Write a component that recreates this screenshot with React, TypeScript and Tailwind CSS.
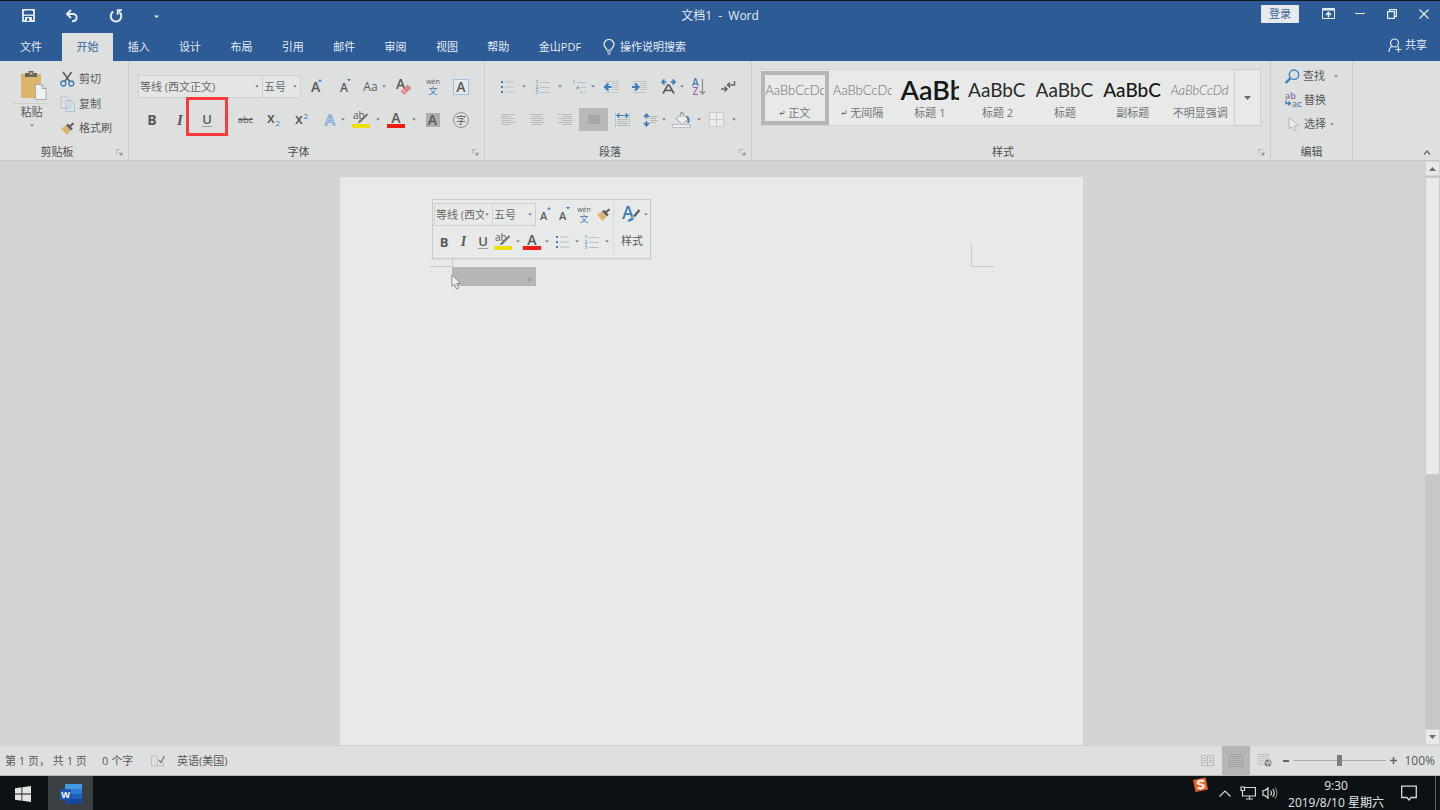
import type { ReactNode } from "react";

const BLUE = "#3f7cb8";
const INK = "#585a59";

type BtnProps = { label: string; className?: string; children?: ReactNode };

function IconButton({ label, className = "w-7", children }: BtnProps) {
  return (
    <button type="button" aria-label={label} title={label} className={`flex h-[23px] shrink-0 items-center justify-center ${className}`}>
      {children}
    </button>
  );
}

function Caret({ className = "text-[#6c6e6d]" }: { className?: string }) {
  return (
    <svg width="4" height="3" viewBox="0 0 4 3" className={className} aria-hidden="true">
      <path d="M0.200 0.500h3.600L2 2.600z" fill="currentColor" />
    </svg>
  );
}

function CaretButton({ label, className = "w-[10px]" }: BtnProps) {
  return (
    <IconButton label={label} className={className}>
      <Caret />
    </IconButton>
  );
}

function Combo({ label, value, className }: { label: string; value: string; className: string }) {
  return (
    <label className={`relative flex h-[23px] items-center border border-[#cfd1d0] ${className}`}>
      <select aria-label={label} defaultValue={value} className="h-full w-full appearance-none overflow-hidden bg-transparent pl-px pr-2 pt-px text-[#666867] outline-none">
        <option>{value}</option>
      </select>
      <span className="pointer-events-none absolute right-[3px] flex">
        <Caret />
      </span>
    </label>
  );
}

function GrowIcon({ up, small }: { up: boolean; small?: boolean }) {
  return (
    <svg width="16" height="18" viewBox="0 0 16 18" className="overflow-visible" aria-hidden="true">
      <text x="2" y="14" fontSize={small ? 11 : up ? 14 : 12} fontWeight="600" fill={INK}>A</text>
      {up ? <path d="M9 3.500h4L11 1z" fill={BLUE} /> : <path d="M9 1h4l-2 2.500z" fill={BLUE} />}
    </svg>
  );
}

function WenIcon() {
  return (
    <svg width="16" height="18" viewBox="0 0 16 18" className="overflow-visible" aria-hidden="true">
      <text x="8" y="6" fontSize="7" textAnchor="middle" fill={INK}>wén</text>
      <text x="8" y="16" fontSize="9" textAnchor="middle" fill={BLUE}>文</text>
    </svg>
  );
}

function BrushIcon() {
  return (
    <svg width="15" height="14" viewBox="0 0 15 14" aria-hidden="true">
      <path d="M1 6.500 6 3.500l4.500 5L7 13 4.500 10.500z" fill="#dcb46c" />
      <path d="M6 3.200l2-1.400 4.700 5-1.800 1.600z" fill={INK} />
      <path d="M9.500 4.500 13.500 1.200" stroke={INK} strokeWidth="2" />
    </svg>
  );
}

function HighlightIcon() {
  return (
    <svg width="20" height="18" viewBox="0 0 20 18" className="overflow-visible" aria-hidden="true">
      <text x="2" y="8" fontSize="10" fill={INK}>ab</text>
      <path d="M16.500 3 9 10.500" stroke="#747675" strokeWidth="2.200" />
      <path d="M8.700 9.200 6.500 12.500l3.600-1.700z" fill={INK} />
      <rect x="1" y="13" width="18" height="4" fill="#ecdf0c" />
    </svg>
  );
}

function FontColorIcon() {
  return (
    <svg width="20" height="18" viewBox="0 0 20 18" className="overflow-visible" aria-hidden="true">
      <text x="10" y="12" fontSize="14" fontWeight="600" textAnchor="middle" fill={INK}>A</text>
      <rect x="1" y="13" width="18" height="4" fill="#ee1c12" />
    </svg>
  );
}

function BulletsIcon() {
  return (
    <svg width="15" height="14" viewBox="0 0 15 14" aria-hidden="true">
      {[2, 7, 12].map((y) => (
        <g key={y}>
          <rect x="1" y={y - 1} width="2" height="2" fill={BLUE} />
          <rect x="5" y={y - 0.5} width="9" height="1" fill="#bdbfbe" />
        </g>
      ))}
    </svg>
  );
}

function NumbersIcon() {
  return (
    <svg width="16" height="16" viewBox="0 0 16 16" className="overflow-visible" aria-hidden="true">
      {[3, 8, 13].map((y, i) => (
        <g key={y}>
          <text x="0.500" y={y + 2} fontSize="5" fill={BLUE}>{i + 1}</text>
          <rect x="5" y={y} width="10" height="1" fill="#bdbfbe" />
        </g>
      ))}
    </svg>
  );
}

function MultilevelIcon() {
  return (
    <svg width="16" height="16" viewBox="0 0 16 16" className="shrink-0 overflow-visible" aria-hidden="true">
      <text x="0.500" y="5" fontSize="5" fill={BLUE}>1</text>
      <text x="4" y="10" fontSize="6" fill={BLUE}>a</text>
      <text x="8.500" y="15" fontSize="5" fill={BLUE}>i</text>
      <path d="M5 3.500h9M9 8.500h5M11 13.500h3" stroke="#bdbfbe" />
    </svg>
  );
}

function IndentIcon({ out }: { out?: boolean }) {
  return (
    <svg width="17" height="14" viewBox="0 0 17 14" aria-hidden="true">
      <path d="M1 1.500h15M9 3.500h7M9 5.500h7M9 7.500h7M9 9.500h7M1 12.500h15" stroke="#c3c5c4" />
      {out ? (
        <path d="M8.500 7H3M5.500 3.500 2 7l3.500 3.500" fill="none" stroke={BLUE} strokeWidth="2.200" />
      ) : (
        <path d="M1 7h5.500M4 3.500 7.500 7 4 10.500" fill="none" stroke={BLUE} strokeWidth="2.200" />
      )}
    </svg>
  );
}

function AlignIcon({ kind }: { kind: "left" | "center" | "right" }) {
  const widths = [14, 10, 14, 10, 14, 10];
  return (
    <svg width="14" height="12" viewBox="0 0 14 12" aria-hidden="true">
      {widths.map((w, i) => {
        const x = kind === "left" ? 0 : kind === "center" ? (14 - w) / 2 : 14 - w;
        return <rect key={i} x={x} y={i * 2} width={w} height="1" fill="#b9bbba" />;
      })}
    </svg>
  );
}

function LauncherIcon() {
  return (
    <svg width="7" height="7" viewBox="0 0 7 7" aria-hidden="true">
      <path d="M0.500 4.500v-4h4" fill="none" stroke="#b0b2b1" />
      <path d="M3 3l2 2M6 3.500v2.500H3.500z" stroke="#8a8c8b" fill="#8a8c8b" strokeWidth="0.600" />
    </svg>
  );
}

function Group({ title, launcher, className, children }: { title: string; launcher?: boolean; className: string; children: ReactNode }) {
  return (
    <section aria-label={title} className={`flex shrink-0 flex-col border-r border-[#cbcdcc] ${className}`}>
      <div className="h-[82px]">{children}</div>
      <div className="relative flex h-[17px] items-center justify-center pt-px text-[#4e504f]">
        <span>{title}</span>
        {launcher && (
          <button type="button" aria-label={`${title}设置`} className="absolute right-[5px] top-[6px]">
            <LauncherIcon />
          </button>
        )}
      </div>
    </section>
  );
}

const tabs = ["插入", "设计", "布局", "引用", "邮件", "审阅", "视图", "帮助"];

function TitleBar() {
  return (
    <header className="bg-[#2d5b96] text-[#e6ecf4]">
      <div className="grid h-8 grid-cols-[1fr_auto_1fr] border-t border-[#10131a]">
        <div className="flex items-center pb-[2px] pl-[6px]">
          <IconButton label="保存" className="w-11">
            <svg width="13" height="13" viewBox="0 0 13 13" aria-hidden="true">
              <path d="M1 1h11v11H1z" fill="none" stroke="#e6ecf4" strokeWidth="1.800" />
              <path d="M3 1.500h7v4.500H3z" fill="#2d5b96" />
              <path d="M1 6.200h11" stroke="#e6ecf4" strokeWidth="1.400" />
              <path d="M3 8h7v4H3z" fill="#e6ecf4" />
              <path d="M5 9.300h2V12H5z" fill="#2d5b96" />
            </svg>
          </IconButton>
          <IconButton label="撤消" className="w-11">
            <svg width="14" height="14" viewBox="0 0 14 14" aria-hidden="true">
              <path d="M6 1 2 5l4 4M2.500 5H8c5 0 5 7.200-1 7.200" fill="none" stroke="#e6ecf4" strokeWidth="2" />
            </svg>
          </IconButton>
          <IconButton label="重复" className="w-11">
            <svg width="14" height="14" viewBox="0 0 14 14" aria-hidden="true">
              <path d="M4.200 2.600A5.300 5.300 0 1 0 9.800 2.600" fill="none" stroke="#e6ecf4" strokeWidth="2" />
              <path d="M13 1.200H8.700v4.600" fill="none" stroke="#e6ecf4" strokeWidth="1.800" />
            </svg>
          </IconButton>
          <IconButton label="自定义快速访问工具栏" className="w-9">
            <svg width="5" height="4" viewBox="0 0 5 4" aria-hidden="true">
              <path d="M0 .5h5M0 1.500h5L2.500 4z" stroke="none" fill="#e6ecf4" />
            </svg>
          </IconButton>
        </div>
        <h1 className="flex items-center whitespace-pre pb-[2px] text-[12px]">文档1  -  Word</h1>
        <div className="flex h-[25px] items-center justify-end">
          <button type="button" className="mr-[13px] h-[18px] w-[38px] rounded-[1px] bg-[#e6eaee] leading-[18px] text-[#3c659c]">登录</button>
          <IconButton label="功能区显示选项" className="w-8">
            <svg width="13" height="11" viewBox="0 0 13 11" aria-hidden="true">
              <path d="M0.500 0.500h12v10H0.500z" fill="none" stroke="#e6ecf4" />
              <path d="M0.500 1.500h12" stroke="#e6ecf4" strokeWidth="2" />
              <path d="M6.500 9.500V5M4 7l2.500-2.500L9 7" fill="none" stroke="#e6ecf4" strokeWidth="1.600" />
            </svg>
          </IconButton>
          <IconButton label="最小化" className="w-8">
            <svg width="10" height="1" aria-hidden="true"><path d="M0 .5h10" stroke="#e6ecf4" /></svg>
          </IconButton>
          <IconButton label="还原" className="w-8">
            <svg width="10" height="10" viewBox="0 0 10 10" fill="none" stroke="#e6ecf4" strokeWidth="1.300" aria-hidden="true">
              <path d="M0.600 2.600h6.800v6.800H0.600zM2.600 2.600v-2h6.800v6.800h-2" />
            </svg>
          </IconButton>
          <IconButton label="关闭" className="w-8">
            <svg width="10" height="10" viewBox="0 0 10 10" stroke="#e6ecf4" strokeWidth="1.200" aria-hidden="true">
              <path d="M.5.5l9 9M9.500.500l-9 9" />
            </svg>
          </IconButton>
        </div>
      </div>
      <nav className="flex h-[29px] items-stretch" aria-label="功能区选项卡">
        <button type="button" className="w-[62px] pt-px">文件</button>
        <button type="button" className="mt-px w-[51px] bg-[#dee0df] text-[#3c659c]">开始</button>
        <div className="flex w-[411px] pt-px">
          {tabs.map((t) => (
            <button type="button" key={t} className="flex-1">{t}</button>
          ))}
        </div>
        <button type="button" className="w-[72px] pt-px">金山PDF</button>
        <button type="button" className="flex items-center gap-[5px] pl-[7px] pt-px">
          <svg width="12" height="16" viewBox="0 0 12 16" fill="none" stroke="#e6ecf4" strokeWidth="1.200" aria-hidden="true">
            <path d="M3.800 11C3.800 9 1 8.300 1 5.500a5 5 0 0 1 10 0C11 8.300 8.200 9 8.200 11zM4 13h4M4.500 15h3" />
          </svg>
          操作说明搜索
        </button>
        <button type="button" className="mb-[3px] ml-auto mr-[13px] flex items-center gap-[3px] pt-px">
          <svg width="14" height="15" viewBox="0 0 14 15" fill="none" stroke="#e6ecf4" strokeWidth="1.200" aria-hidden="true">
            <circle cx="6.500" cy="5" r="4" />
            <path d="M1 14c0-3 1.500-5 3.500-5.500M8 8.500l1 .5M10.500 8.500v6M7.500 11.500h6" />
          </svg>
          共享
        </button>
      </nav>
    </header>
  );
}

function ClipboardGroup() {
  return (
    <Group title="剪贴板" launcher className="w-[129px] [&>div:last-child]:pr-[14px]">
      <div className="flex h-full pl-3 pt-2">
        <div className="flex w-[39px] flex-col items-center">
          <button type="button" aria-label="粘贴" className="flex h-[34px] w-full justify-end pr-1 pt-[2px]">
            <svg width="27" height="30" viewBox="0 0 27 30" aria-hidden="true">
              <path d="M1 3h20v24H1z" fill="#dcb46c" />
              <path d="M5 2h3.500V0h5v2H17v4H5z" fill="#626463" />
              <rect x="9.500" y="1.500" width="3" height="2" fill="#dcb46c" />
              <path d="M15.500 13.500h6.500l4 4v11H15.500z" fill="#f0f2f1" stroke="#a9abaa" />
              <path d="M22 13.500v4h4" fill="none" stroke="#a9abaa" />
            </svg>
          </button>
          <button type="button" className="flex w-full flex-col items-center gap-1 border-t border-[#cfd1d0] text-[#585a59]">
            <span className="leading-4">粘贴</span>
            <Caret />
          </button>
        </div>
        <div className="flex flex-col pl-[9px] text-[#585a59]">
          <button type="button" className="flex h-[25px] items-center gap-1 pb-1">
            <svg width="15" height="16" viewBox="0 0 15 16" fill="none" aria-hidden="true">
              <path d="M3 1l7 10M11.500 1l-7 10" stroke="#585a59" strokeWidth="1.500" />
              <circle cx="3.300" cy="12.500" r="2.500" stroke={BLUE} strokeWidth="1.300" />
              <circle cx="11.300" cy="12.500" r="2.500" stroke={BLUE} strokeWidth="1.300" />
            </svg>
            剪切
          </button>
          <button type="button" className="flex h-[25px] items-center gap-1 pb-1">
            <svg width="15" height="16" viewBox="0 0 15 16" fill="#e2e7ea" stroke="#b3bcc4" aria-hidden="true">
              <path d="M1 .8h5l3 3v8H1zM6 4.500h5.500l3 3v8H6z" />
              <path d="M11 4.500v3.500h3.500M7.500 9.500h5M7.500 11.500h5M7.500 13.500h5M2.500 4h3M2.500 6h3M2.500 8h3" stroke="#bfd0de" fill="none" />
            </svg>
            复制
          </button>
          <button type="button" className="flex h-[25px] items-center gap-1 pb-1">
            <BrushIcon />
            格式刷
          </button>
        </div>
      </div>
    </Group>
  );
}

function FontGroup() {
  return (
    <Group title="字体" launcher className="w-[356px] [&>div:last-child]:pr-4">
      <div className="flex flex-col gap-[10px] pl-[9px] pt-[14px]">
        <div className="flex">
          <Combo label="字体" value="等线 (西文正文)" className="w-[125px] bg-[#e5e7e6]" />
          <Combo label="字号" value="五号" className="-ml-px mr-px w-[39px] bg-[#e5e7e6]" />
          <IconButton label="增大字号" className="w-[29px]"><GrowIcon up /></IconButton>
          <IconButton label="减小字号" className="w-[29px]"><GrowIcon up={false} /></IconButton>
          <IconButton label="更改大小写" className="w-[29px] gap-1">
            <span className="text-[12px] font-medium text-[#585a59]">Aa</span>
            <Caret />
          </IconButton>
          <IconButton label="清除格式" className="w-[29px]">
            <svg width="18" height="18" viewBox="0 0 18 18" className="overflow-visible" aria-hidden="true">
              <text x="1" y="11" fontSize="14" fontWeight="600" fill={INK}>A</text>
              <path d="M5.500 13.500 12.500 6.500l4 3.500-7 7z" fill="#de8589" />
              <path d="M7.500 11.500l4 3.500" stroke="#f0d6d7" />
            </svg>
          </IconButton>
          <IconButton label="拼音指南" className="w-[29px]"><WenIcon /></IconButton>
          <IconButton label="字符边框" className="w-7">
            <span className="flex h-4 w-4 items-center justify-center border border-[#a3c0dc] bg-[#e6e9ea] text-[14px] font-semibold leading-none text-[#585a59]">A</span>
          </IconButton>
        </div>
        <div className="flex text-[#585a59]">
          <IconButton label="加粗"><span className="text-[14px] font-bold leading-4">B</span></IconButton>
          <IconButton label="倾斜"><span className="font-['Liberation_Serif',serif] text-[15px] font-bold italic leading-4">I</span></IconButton>
          <div className="relative flex">
            <IconButton label="下划线" className="w-[26px]">
              <span className="border-b border-[#9c9e9d] text-[13px] font-semibold leading-[13px]">U</span>
            </IconButton>
            <CaretButton label="下划线选项" className="w-[11px]" />
            <span className="pointer-events-none absolute -left-2 -top-[11px] h-[39px] w-[42px] border-[3px] border-[#fa3a3c]" />
          </div>
          <IconButton label="删除线" className="w-[29px]"><span className="pt-px text-[9px] line-through">abc</span></IconButton>
          <IconButton label="下标">
            <svg width="14" height="16" viewBox="0 0 14 16" className="overflow-visible" aria-hidden="true">
              <text x="0" y="11" fontSize="14" fontWeight="600" fill={INK}>x</text>
              <text x="8.500" y="14" fontSize="8" fill={BLUE}>2</text>
            </svg>
          </IconButton>
          <IconButton label="上标">
            <svg width="14" height="16" viewBox="0 0 14 16" className="overflow-visible" aria-hidden="true">
              <text x="0" y="12" fontSize="14" fontWeight="600" fill={INK}>x</text>
              <text x="8.500" y="6.500" fontSize="8" fill={BLUE}>2</text>
            </svg>
          </IconButton>
          <IconButton label="文本效果" className="w-[22px] pl-[6px]">
            <svg width="14" height="16" viewBox="0 0 14 16" className="overflow-visible" aria-hidden="true">
              <text x="7" y="13" fontSize="15" fontWeight="600" textAnchor="middle" fill="#e8eef3" stroke="#7aa8d3" strokeWidth="1">A</text>
            </svg>
          </IconButton>
          <CaretButton label="文本效果选项" />
          <IconButton label="突出显示" className="w-[25px]"><HighlightIcon /></IconButton>
          <CaretButton label="突出显示颜色" />
          <IconButton label="字体颜色" className="w-[26px]"><FontColorIcon /></IconButton>
          <CaretButton label="选择字体颜色" className="w-[9px]" />
          <IconButton label="字符底纹" className="w-[29px]">
            <span className="flex h-[14px] w-[14px] items-center justify-center bg-[#acaead] text-[14px] font-semibold leading-none">A</span>
          </IconButton>
          <IconButton label="带圈字符" className="w-7">
            <span className="flex h-4 w-4 items-center justify-center rounded-full border border-[#8f9190] text-[10px] leading-none">字</span>
          </IconButton>
        </div>
      </div>
    </Group>
  );
}

function ParagraphGroup() {
  return (
    <Group title="段落" launcher className="w-[267px] [&>div:last-child]:pr-4">
      <div className="flex flex-col gap-[10px] pl-[9px] pt-[14px]">
        <div className="flex">
          <IconButton label="项目符号" className="w-[26px]"><BulletsIcon /></IconButton>
          <CaretButton label="项目符号库" className="w-2" />
          <IconButton label="编号" className="w-[29px]"><NumbersIcon /></IconButton>
          <CaretButton label="编号库" className="w-[6px]" />
          <IconButton label="多级列表" className="w-[26px] pl-2"><MultilevelIcon /></IconButton>
          <CaretButton label="列表库" className="w-[7px]" />
          <IconButton label="减少缩进量" className="w-[30px]"><IndentIcon out /></IconButton>
          <IconButton label="增加缩进量" className="w-[26px]"><IndentIcon /></IconButton>
          <IconButton label="中文版式" className="w-[26px] pl-[6px]">
            <svg width="17" height="16" viewBox="0 0 17 16" className="shrink-0" aria-hidden="true">
              <path d="M6.500 3H2M4.500.500 2 3l2.500 2.500M10.500 3H15M12.500.500 15 3l-2.500 2.500" fill="none" stroke={BLUE} strokeWidth="1.700" />
              <path d="M3 14.500 7.800 6h1.400L14 14.500M5 11.500h7" fill="none" stroke={INK} strokeWidth="1.700" />
            </svg>
          </IconButton>
          <CaretButton label="中文版式选项" className="w-[7px]" />
          <IconButton label="排序">
            <svg width="14" height="18" viewBox="0 0 14 18" className="overflow-visible" aria-hidden="true">
              <text x="0" y="8" fontSize="10" fontWeight="600" fill={BLUE}>A</text>
              <text x="0.500" y="17" fontSize="10" fontWeight="600" fill="#9a62b5">Z</text>
              <path d="M10.500 1v15M8 13l2.500 3 2.500-3" fill="none" stroke="#8c8e8d" strokeWidth="1.200" />
            </svg>
          </IconButton>
          <IconButton label="显示编辑标记" className="w-[30px]">
            <svg width="15" height="13" viewBox="0 0 15 13" fill="none" stroke="#666867" strokeWidth="1.500" aria-hidden="true">
              <path d="M13.500 1v4H7M9 2.500 6.500 5 9 7.500M0 9h6M3.500 6.500 6 9l-2.500 2.500" />
            </svg>
          </IconButton>
        </div>
        <div className="flex">
          <IconButton label="左对齐"><AlignIcon kind="left" /></IconButton>
          <IconButton label="居中" className="w-[29px]"><AlignIcon kind="center" /></IconButton>
          <IconButton label="右对齐"><AlignIcon kind="right" /></IconButton>
          <IconButton label="两端对齐" className="w-[29px] bg-[#b7b9b8]">
            <svg width="12" height="9" aria-hidden="true"><rect width="12" height="9" fill="#a6a8a7" /></svg>
          </IconButton>
          <IconButton label="分散对齐" className="w-7">
            <svg width="15" height="14" viewBox="0 0 15 14" fill="none" aria-hidden="true">
              <path d="M.5 0v14M14.500 0v14" stroke="#a9c8e4" />
              <path d="M2 2.500h11M4.500.300 2 2.500l2.500 2.200M10.500.300 13 2.500l-2.500 2.200" stroke={BLUE} strokeWidth="1.200" />
              <path d="M2 6.500h11M2 8.500h11M2 10.500h11M2 12.500h11" stroke="#b7b9b8" />
            </svg>
          </IconButton>
          <IconButton label="行和段落间距" className="w-[25px] pl-1">
            <svg width="15" height="14" viewBox="0 0 15 14" fill="none" aria-hidden="true">
              <path d="M3.500 1.500v4M1 4l2.500-2.700L6 4M3.500 8v4M1 10l2.500 2.700L6 10" stroke={BLUE} strokeWidth="1.600" />
              <path d="M7 3.500h8M7 5.500h6M7 7.500h8M7 9.500h6" stroke="#b7b9b8" />
            </svg>
          </IconButton>
          <CaretButton label="行距选项" className="w-[6px]" />
          <IconButton label="底纹" className="w-7 pl-[2px]">
            <svg width="20" height="18" viewBox="0 0 20 18" aria-hidden="true">
              <path d="M4 8 10 2l6 6-5.500 5.500z" fill="#eceeed" stroke="#a3a5a4" />
              <path d="M8.500 6V1.500h2.500V6" fill="none" stroke="#a3a5a4" />
              <path d="M14.500 5.500c2.500 1 2.500 4 1.500 6.500" stroke={BLUE} strokeWidth="1.800" fill="none" />
              <rect x=".5" y="13.500" width="18" height="3" fill="#eceeed" stroke="#bdbfbe" />
            </svg>
          </IconButton>
          <CaretButton label="底纹颜色" className="w-[7px]" />
          <IconButton label="边框">
            <svg width="15" height="15" viewBox="0 0 15 15" aria-hidden="true">
              <path d="M.5.5h14v14H.5zM7.500.500v14M.5 7.500h14" fill="#eaeceb" stroke="#c9cbca" />
            </svg>
          </IconButton>
          <CaretButton label="边框选项" className="w-[7px]" />
        </div>
      </div>
    </Group>
  );
}

const styles = [
  { name: "正文", mark: true, sample: "AaBbCcDd", cls: "text-[13px] text-[#6c6e6d] font-light", on: true },
  { name: "无间隔", mark: true, sample: "AaBbCcDd", cls: "text-[13px] text-[#6c6e6d] font-light" },
  { name: "标题 1", sample: "AaBbC", cls: "text-[27px] text-[#161817] font-semibold" },
  { name: "标题 2", sample: "AaBbC", cls: "text-[19px] text-[#2a2c2b]" },
  { name: "标题", sample: "AaBbC", cls: "text-[19px] text-[#2a2c2b]" },
  { name: "副标题", sample: "AaBbC", cls: "text-[19px] text-[#161817] font-medium" },
  { name: "不明显强调", sample: "AaBbCcDd", cls: "text-[13px] text-[#6c6e6d] font-light italic" },
];

function StylesGroup() {
  return (
    <Group title="样式" launcher className="w-[519px] [&>div:last-child]:pr-4">
      <div className="flex pl-[9px] pt-2">
        <div className="flex h-[57px] w-[473px] border-y border-[#d3d5d4] bg-[#e8eae9]">
          {styles.map((s) => (
            <button type="button" key={s.name} className={`mt-px flex min-w-0 flex-1 flex-col items-center border-4 ${s.on ? "border-[#b5b7b6]" : "border-transparent"}`}>
              <span className={`flex h-[30px] w-[59px] items-center overflow-hidden whitespace-nowrap font-[Lato,sans-serif] leading-[30px] ${s.cls}`}>{s.sample}</span>
              <span className="flex items-center gap-[3px] whitespace-nowrap leading-4 text-[#737574]">
                {s.mark && (
                  <svg width="6" height="6" viewBox="0 0 6 6" fill="none" stroke="#737574" aria-hidden="true">
                    <path d="M5 .5v3H1M2.500 2 1 3.500 2.500 5" />
                  </svg>
                )}
                {s.name}
              </span>
            </button>
          ))}
        </div>
        <button type="button" aria-label="其他样式" className="flex h-[57px] w-[27px] items-center justify-center border border-[#cdcfce] bg-[#e8eae9]">
          <svg width="7" height="4" viewBox="0 0 7 4" aria-hidden="true"><path d="M0 0h7L3.500 4z" fill="#6c6e6d" /></svg>
        </button>
      </div>
    </Group>
  );
}

function EditGroup() {
  return (
    <Group title="编辑" className="w-[82px]">
      <div className="flex flex-col items-start pl-[14px] pt-1 text-[#585a59]">
        <button type="button" className="flex h-[23px] items-center gap-[3px]">
          <svg width="15" height="15" viewBox="0 0 15 15" fill="none" stroke={BLUE} aria-hidden="true">
            <circle cx="9" cy="5.700" r="4.700" strokeWidth="1.400" />
            <path d="M5.500 9 .8 14" strokeWidth="2.400" />
          </svg>
          查找
          <span className="pl-[6px]"><Caret /></span>
        </button>
        <button type="button" className="flex h-6 items-center gap-[2px]">
          <svg width="17" height="16" viewBox="0 0 17 16" fontSize="9" fontWeight="600" className="overflow-visible" aria-hidden="true">
            <text x="0" y="7" fill="#7d7f7e">a<tspan fill="#9a62b5">b</tspan></text>
            <text x="7" y="15" fill="#7d7f7e">a<tspan fill={BLUE}>c</tspan></text>
            <path d="M1 8.500v3h4.500M3.500 9.500l2 2-2 2" fill="none" stroke={BLUE} strokeWidth="1.300" />
          </svg>
          替换
        </button>
        <button type="button" className="flex h-6 items-center gap-1 pl-[3px]">
          <svg width="12" height="16" viewBox="0 0 12 16" aria-hidden="true">
            <path d="M1 1v12l3-2.500L6.300 15l2-1L6.200 9.800h4.300z" fill="#eceeed" stroke="#b3b5b4" />
          </svg>
          选择
          <Caret />
        </button>
      </div>
    </Group>
  );
}

function Ribbon() {
  return (
    <div className="flex h-[100px] border-b border-[#c6c8c7] bg-[#dee0df]">
      <ClipboardGroup />
      <FontGroup />
      <ParagraphGroup />
      <StylesGroup />
      <EditGroup />
      <button type="button" aria-label="折叠功能区" className="mb-[5px] ml-auto mr-[9px] self-end">
        <svg width="8" height="5" viewBox="0 0 8 5" fill="none" stroke="#6c6e6d" strokeWidth="1.200" aria-hidden="true"><path d="M1 4.500 4 1l3 3.500" /></svg>
      </button>
    </div>
  );
}

function MiniToolbar() {
  return (
    <div role="toolbar" aria-label="浮动工具栏" className="absolute left-[92px] top-[22px] flex h-[60px] w-[219px] border border-[#c9cbca] bg-[#e8eae9] text-[#585a59] shadow-xs">
      <div className="my-[3px] flex w-[181px] flex-col border-r border-[#d9dbda] pl-px">
        <div className="flex">
          <Combo label="浮动字体" value="等线 (西文正文)" className="w-[59px]" />
          <Combo label="浮动字号" value="五号" className="-ml-px w-[44px]" />
          <div className="flex flex-1 justify-around">
            <IconButton label="增大字号" className="w-4"><GrowIcon up small /></IconButton>
            <IconButton label="减小字号" className="w-4"><GrowIcon up={false} small /></IconButton>
            <IconButton label="拼音指南" className="w-4"><WenIcon /></IconButton>
            <IconButton label="格式刷" className="w-4"><BrushIcon /></IconButton>
          </div>
        </div>
        <div className="flex pt-1">
          <IconButton label="加粗" className="w-5"><span className="text-[13px] font-bold leading-4">B</span></IconButton>
          <IconButton label="倾斜" className="w-[19px]"><span className="font-['Liberation_Serif',serif] text-[14px] font-bold italic leading-4">I</span></IconButton>
          <IconButton label="下划线" className="w-5"><span className="border-b border-[#9c9e9d] text-[13px] font-semibold leading-[13px]">U</span></IconButton>
          <IconButton label="突出显示" className="w-5"><HighlightIcon /></IconButton>
          <CaretButton label="突出显示颜色" className="w-[9px]" />
          <IconButton label="字体颜色" className="w-5"><FontColorIcon /></IconButton>
          <CaretButton label="选择字体颜色" />
          <IconButton label="项目符号" className="w-5"><BulletsIcon /></IconButton>
          <CaretButton label="项目符号库" />
          <IconButton label="编号" className="w-5"><NumbersIcon /></IconButton>
          <CaretButton label="编号库" className="w-[9px]" />
        </div>
      </div>
      <button type="button" className="flex flex-1 flex-col items-center gap-[9px] pt-[5px]">
        <span className="flex items-center gap-[3px] pl-[6px]">
          <svg width="19" height="18" viewBox="0 0 19 18" className="overflow-visible" aria-hidden="true">
            <text x="0" y="14" fontSize="18" fontWeight="600" fill={BLUE}>A</text>
            <path d="M17.500 5 12 11.500" stroke={INK} strokeWidth="2.200" />
            <path d="M5 17c1-3.500 4.500-5 7-4.500 0 3-3.500 4.500-7 4.500z" fill={BLUE} stroke="#e8eae9" strokeWidth="0.600" />
          </svg>
          <Caret />
        </span>
        <span className="leading-[18px]">样式</span>
      </button>
    </div>
  );
}

function Workspace() {
  return (
    <main className="flex min-h-0 flex-1 bg-[#d3d5d4]">
      <div className="flex min-w-0 flex-1 justify-center pr-[2px] pt-4">
        <article className="relative w-[743px] bg-[#e8eae9]">
          <div className="flex h-[90px] items-end justify-between pl-[90px] pr-[89px]">
            <span className="h-[23px] w-[23px] border-b border-r border-[#c9cbca]" />
            <span className="h-[23px] w-[23px] border-b border-l border-[#c9cbca]" />
          </div>
          <p className="relative ml-[112px] flex h-[19px] w-[84px] items-center justify-end bg-[#b5b7b6] pr-1">
            <svg width="5" height="5" viewBox="0 0 5 5" fill="none" stroke="#8f9190" aria-hidden="true" className="mt-[6px]">
              <path d="M4 0v3H1M2 1.500.800 3 2 4.500" />
            </svg>
            <svg width="11" height="16" viewBox="0 0 11 16" className="absolute -left-px top-[7px]" aria-hidden="true">
              <path d="M.8 1v11.500l2.700-2.300L5.500 15l2.200-1-2-4.500H9.500z" fill="#eef0ef" stroke="#8f9190" />
            </svg>
          </p>
          <MiniToolbar />
        </article>
      </div>
      <div className="flex w-[15px] flex-col bg-[#c6c8c7]" aria-label="垂直滚动条">
        <button type="button" aria-label="向上滚动" className="flex h-[15px] items-center justify-center border border-[#d3d5d4] bg-[#e8eae9]">
          <svg width="7" height="4" viewBox="0 0 7 4" aria-hidden="true"><path d="M0 4h7L3.500 0z" fill="#6c6e6d" /></svg>
        </button>
        <div className="flex-1 pt-px">
          <div className="h-[54%] border border-[#cbcdcc] bg-[#e8eae9]" />
        </div>
        <button type="button" aria-label="向下滚动" className="flex h-4 items-center justify-center border border-[#d3d5d4] bg-[#e8eae9]">
          <svg width="7" height="4" viewBox="0 0 7 4" aria-hidden="true"><path d="M0 0h7L3.500 4z" fill="#6c6e6d" /></svg>
        </button>
      </div>
    </main>
  );
}

function StatusBar() {
  return (
    <footer className="flex h-[31px] items-center border-b border-t border-b-[#b9bbba] border-t-[#cfd1d0] bg-[#dee0df] pl-[5px] pr-[5px] text-[#585a59]">
      <span className="w-[97px] whitespace-nowrap pt-px">第 1 页， 共 1 页</span>
      <span className="w-[49px] pt-px">0 个字</span>
      <svg width="14" height="12" viewBox="0 0 14 12" fill="none" aria-hidden="true">
        <path d="M6.500 1.500v10M6.500 1.500C5 .5 2 .5.500 1v10c2-.5 4.500-.5 6 .5 1.500-1 4-1 6-.5V7" stroke="#bdbfbe" />
        <path d="M8 5l2 2.500L13.500 1" stroke="#6c6e6d" strokeWidth="1.200" />
      </svg>
      <span className="pl-3 pt-px">英语(美国)</span>
      <div className="ml-auto flex h-full items-center">
        <IconButton label="阅读视图" className="w-[29px]">
          <svg width="13" height="12" viewBox="0 0 13 12" fill="none" stroke="#b5b7b6" aria-hidden="true">
            <path d="M6.500 1.500v10C5 10.500 2.500 10.500.500 10.500v-10c2 0 4.500 0 6 1 1.500-1 4-1 6-1v10c-2 0-4.500 0-6 1M2 3.500h3M2 5.500h3M2 7.500h3M8 3.500h3M8 5.500h3M8 7.500h3" />
          </svg>
        </IconButton>
        <button type="button" aria-label="页面视图" className="flex h-full w-7 items-center justify-center bg-[#b5b7b6]">
          <svg width="14" height="13" viewBox="0 0 14 13" fill="none" stroke="#a1a3a2" aria-hidden="true">
            <path d="M.5.5h13v12H.5zM2 2.500h10M2 4.500h10M2 6.500h10M2 8.500h10M2 10.500h10" />
          </svg>
        </button>
        <IconButton label="Web 版式视图" className="w-[29px]">
          <svg width="14" height="13" viewBox="0 0 14 13" fill="none" aria-hidden="true">
            <path d="M10.500 5V.5H.5v10h6M2 2.500h7M2 4.500h7M2 6.500h4M2 8.500h3" stroke="#c0c2c1" />
            <circle cx="10" cy="9" r="3.500" fill="#7c7e7d" />
            <path d="M7.500 8l2.500 1-.5 2.500M11.500 6.500l-.5 2 2 1" stroke="#dee0df" strokeWidth="1.100" />
          </svg>
        </IconButton>
        <IconButton label="缩小" className="w-[14px]">
          <svg width="6" height="2" aria-hidden="true"><rect width="6" height="2" fill="#666867" /></svg>
        </IconButton>
        <input
          type="range"
          aria-label="缩放"
          defaultValue={50}
          className="h-4 w-[93px] appearance-none bg-transparent [&::-webkit-slider-runnable-track]:h-px [&::-webkit-slider-runnable-track]:bg-[#a9abaa] [&::-webkit-slider-thumb]:-mt-[5px] [&::-webkit-slider-thumb]:h-[11px] [&::-webkit-slider-thumb]:w-[5px] [&::-webkit-slider-thumb]:appearance-none [&::-webkit-slider-thumb]:bg-[#7c7e7d]"
        />
        <IconButton label="放大" className="w-[14px]">
          <svg width="7" height="7" aria-hidden="true"><path d="M0 3.500h7M3.500 0v7" stroke="#666867" strokeWidth="1.600" /></svg>
        </IconButton>
        <span className="w-[35px] text-right text-[12px]">100%</span>
      </div>
    </footer>
  );
}

function Taskbar() {
  return (
    <div className="flex h-[34px] items-stretch overflow-hidden bg-[#0c1214] text-[#e3e5e4]">
      <button type="button" aria-label="开始菜单" className="flex w-12 items-center pl-[15px] pt-px">
        <svg width="16" height="16" viewBox="0 0 16 16" fill="#e3e5e4" aria-hidden="true">
          <path d="M0 2.200 6.500 1.300v6.300H0zM7.300 1.200 16 0v7.600H7.300zM0 8.400h6.500v6.300L0 13.800zM7.300 8.400H16V16l-8.700-1.200z" />
        </svg>
      </button>
      <button type="button" aria-label="Word" className="flex w-[45px] items-center justify-center bg-[#3a4041] pt-px">
        <svg width="22" height="20" viewBox="0 0 22 20" aria-hidden="true">
          <path d="M5 0h17v5H5z" fill="#3f9be4" />
          <path d="M5 5h17v5H5z" fill="#2b7bd0" />
          <path d="M5 10h17v5H5z" fill="#1d5dbb" />
          <path d="M5 15h17v5H5z" fill="#17479a" />
          <rect y="5" width="11" height="11" rx="1" fill="#1c56b0" />
          <text x="5.500" y="13.500" fontSize="9" fontWeight="700" textAnchor="middle" fill="#fff">W</text>
        </svg>
      </button>
      <div className="ml-auto flex">
        <button type="button" aria-label="搜狗输入法" className="flex w-6 pt-px">
          <svg width="17" height="16" viewBox="0 0 17 16" aria-hidden="true">
            <path d="M1 3 13.500.500 16 12.500 3.500 15z" fill="#e2622a" />
            <path d="M12 4.200C9.500 3 5.500 4 5.700 6c.2 2.200 5.900.8 6.100 3 .1 2-3.800 3-6.300 1.600" fill="none" stroke="#f6efe9" strokeWidth="2.200" />
          </svg>
        </button>
        <div className="flex items-center">
          <IconButton label="显示隐藏的图标" className="w-[18px]">
            <svg width="12" height="7" viewBox="0 0 12 7" fill="none" stroke="#d6d8d7" strokeWidth="1.200" aria-hidden="true"><path d="M.5 6.500 6 1l5.500 5.500" /></svg>
          </IconButton>
          <IconButton label="网络">
            <svg width="16" height="14" viewBox="0 0 16 14" fill="none" stroke="#d6d8d7" strokeWidth="1.200" aria-hidden="true">
              <path d="M5 1.500h10.400v8.500H4M9.500 10v3M6 13h7M1 1h3.500v3.500H1zM2.500 4.500V10H4" />
            </svg>
          </IconButton>
          <IconButton label="音量" className="w-4">
            <svg width="16" height="14" viewBox="0 0 16 14" fill="none" stroke="#d6d8d7" strokeWidth="1.200" aria-hidden="true">
              <path d="M1 4.500h2L6 1.800v10.400L3 9.500H1zM8.500 4.500c1.200 1.500 1.200 3.500 0 5M10.700 3c2 2.500 2 5.500 0 8" />
              <path d="M13 1.500c2.500 3.500 2.500 7.500 0 11" stroke="#7c7e7d" />
            </svg>
          </IconButton>
        </div>
        <button type="button" className="flex w-[116px] flex-col items-center whitespace-nowrap pt-px text-[12px] leading-[17px]">
          <span>9:30</span>
          <span>2019/8/10 星期六</span>
        </button>
        <div className="flex items-center">
          <IconButton label="通知中心" className="w-[30px]">
            <svg width="16" height="16" viewBox="0 0 16 16" fill="none" stroke="#d6d8d7" strokeWidth="1.300" aria-hidden="true">
              <path d="M.7 1.200h14.600v11.300H10L8 15l-2-2.500H.7z" />
            </svg>
          </IconButton>
        </div>
        <div className="ml-[11px] w-[5px] border-l border-[#5a5e5f]" />
      </div>
    </div>
  );
}

export default function App() {
  return (
    <div className="flex h-screen flex-col overflow-hidden font-['Open_Sans','Noto_Sans_CJK_SC',sans-serif] text-[11px]">
      <TitleBar />
      <Ribbon />
      <Workspace />
      <StatusBar />
      <Taskbar />
    </div>
  );
}
